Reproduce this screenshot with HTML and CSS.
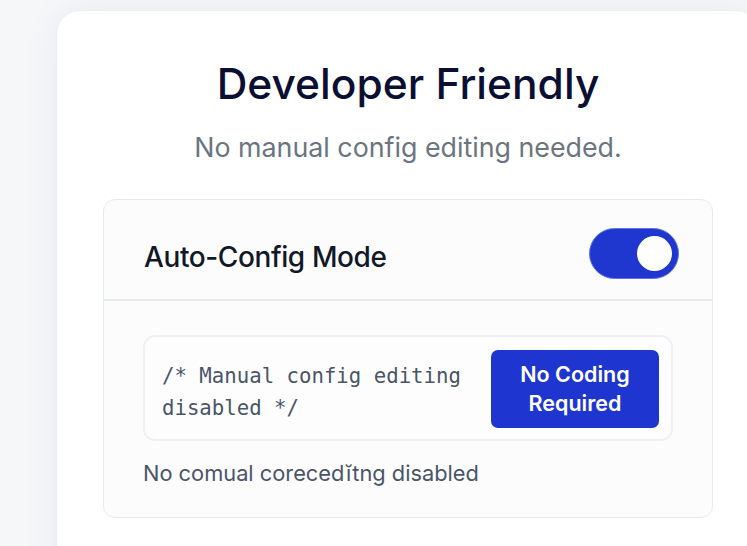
FILE: index.html
```html
<!DOCTYPE html>
<html lang="en">
<head>
<meta charset="utf-8">
<title>Developer Friendly</title>
<link rel="stylesheet" href="styles.css">
</head>
<body>
<div class="page">
  <section class="card">
    <h1 class="title">Developer Friendly</h1>
    <p class="subtitle">No manual config editing needed.</p>
    <div class="panel">
      <div class="panel-head">
        <span class="panel-label">Auto-Config Mode</span>
        <span class="toggle" role="switch" aria-checked="true"><span class="knob"></span></span>
      </div>
      <div class="panel-body">
        <div class="code-box">
          <code class="code">/* Manual config editing disabled */</code>
          <button class="badge" type="button">No Coding Required</button>
        </div>
        <p class="note">No comual corecedĭtng disabled</p>
      </div>
    </div>
  </section>
</div>
</body>
</html>
```
FILE: styles.css
```css
html, body {
  margin: 0;
  padding: 0;
  overflow: hidden;
  background: #f6f7f9;
  font-family: "Inter", "Noto Sans", sans-serif;
}
.page {
  width: 747px;
  height: 546px;
  padding: 10px 0 0 56px;
  box-sizing: border-box;
  overflow: hidden;
}
.card {
  width: 704px;
  height: 600px;
  box-sizing: border-box;
  background: #ffffff;
  border: 1px solid #eceef1;
  border-radius: 24px;
  box-shadow: 0 0 36px rgba(20, 30, 60, 0.06);
  padding: 47px 46px 0 46px;
}
.title {
  margin: 0;
  text-align: center;
  font-size: 42.5px;
  font-weight: 500;
  line-height: 52px;
  color: #0b1033;
}
.subtitle {
  margin: 20px 0 0 0;
  text-align: center;
  font-size: 26.8px;
  line-height: 34px;
  color: #6b7580;
}
.panel {
  margin-top: 35px;
  border: 1px solid #e6e9ee;
  border-radius: 12px;
  background: #fcfcfd;
  overflow: hidden;
}
.panel-head {
  display: flex;
  align-items: center;
  justify-content: space-between;
  height: 101px;
  box-sizing: border-box;
  padding: 8px 33px 0 40px;
  border-bottom: 2px solid #e6e9ef;
}
.panel-label {
  padding-top: 6px;
  font-size: 28px;
  font-weight: 500;
  color: #111827;
  letter-spacing: -0.4px;
}
.toggle {
  display: flex;
  align-items: center;
  justify-content: flex-end;
  width: 90px;
  height: 51px;
  box-sizing: border-box;
  padding-right: 6px;
  border-radius: 26px;
  background: #1f36cf;
  border: 1.5px solid #6073e3;
}
.knob {
  width: 35px;
  height: 35px;
  border-radius: 50%;
  background: #ffffff;
}
.panel-body {
  padding: 34px 39px 30px 39px;
}
.code-box {
  display: flex;
  align-items: center;
  justify-content: space-between;
  height: 106px;
  box-sizing: border-box;
  padding: 0 12px 0 17px;
  border: 2px solid #eef0f3;
  border-radius: 12px;
  background: #fdfdfe;
}
.code {
  width: 310px;
  padding-top: 8px;
  font-family: "DejaVu Sans Mono", "Liberation Mono", monospace;
  font-size: 20.7px;
  line-height: 32px;
  color: #4a5565;
}
.badge {
  width: 168px;
  height: 78px;
  margin-top: 2px;
  border: none;
  border-radius: 7px;
  background: #1f35d0;
  color: #ffffff;
  font-family: "Inter", "Noto Sans", sans-serif;
  font-size: 21.5px;
  font-weight: 600;
  line-height: 29px;
  padding: 0 18px;
}
.note {
  margin: 18px 0 0 0;
  font-size: 21.8px;
  line-height: 28px;
  color: #4a5568;
}
```
